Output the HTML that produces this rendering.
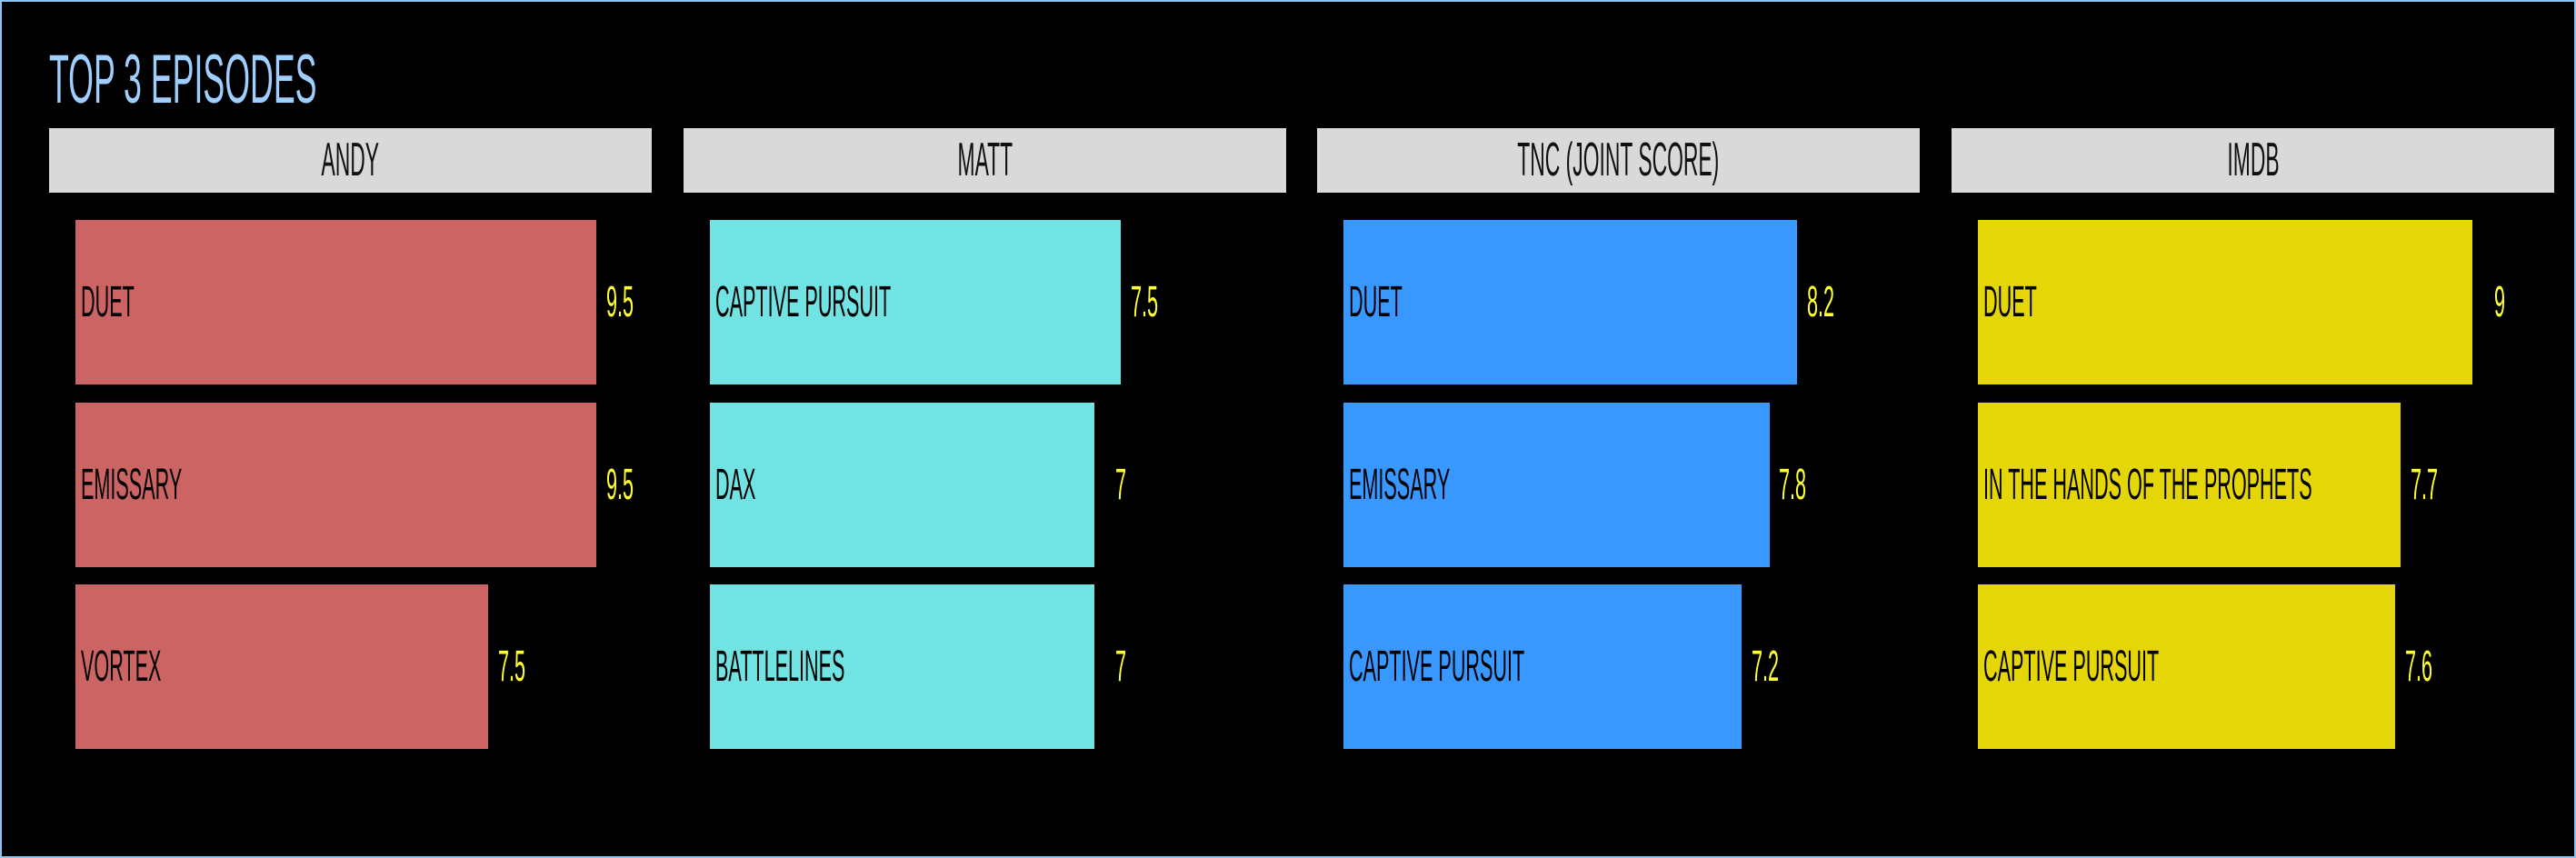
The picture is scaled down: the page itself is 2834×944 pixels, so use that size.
<!DOCTYPE html>
<html><head><meta charset="utf-8"><style>
html,body{margin:0;padding:0;background:#000;}
body{width:2834px;height:944px;position:relative;overflow:hidden;font-family:"Liberation Sans",sans-serif;}
.frame{position:absolute;left:0;top:0;width:2830px;height:940px;border:2px solid #8fc4f0;}
.t{position:absolute;white-space:nowrap;line-height:1;}
.t span{display:inline-block;transform:scaleX(.47);transform-origin:left center;}
.title{left:54px;top:50px;font-size:76px;color:#9fcfff;}
.hd{position:absolute;top:141px;height:71px;background:#d9d9d9;width:663px;}
.hd div{position:absolute;left:0;right:0;top:0;height:71px;line-height:71px;text-align:center;font-size:52px;color:#111;}
.hd div span{display:inline-block;transform:scaleX(.44);transform-origin:center center;}
.bar{position:absolute;height:181px;}
.lbl{position:absolute;left:6px;top:0;height:181px;line-height:181px;font-size:48px;color:#000;white-space:nowrap;}
.lbl span,.val span{display:inline-block;transform:scaleX(.45);transform-origin:left center;}
.val{position:absolute;height:181px;line-height:181px;font-size:48px;color:#ffff33;white-space:nowrap;}
.r{background:#cd6464}.c{background:#72e3e3}.b{background:#3898ff}.y{background:#e5d608}
</style></head><body>
<div class="frame"></div>
<div class="t title"><span>TOP 3 EPISODES</span></div>

<div class="hd" style="left:54px"><div><span>ANDY</span></div></div>
<div class="hd" style="left:752px"><div><span>MATT</span></div></div>
<div class="hd" style="left:1449px"><div><span>TNC (JOINT SCORE)</span></div></div>
<div class="hd" style="left:2147px"><div><span>IMDB</span></div></div>

<div class="bar r" style="left:83px;top:242px;width:573px"><div class="lbl"><span>DUET</span></div></div>
<div class="val" style="left:667px;top:242px"><span>9.5</span></div>
<div class="bar r" style="left:83px;top:443px;width:573px"><div class="lbl"><span>EMISSARY</span></div></div>
<div class="val" style="left:667px;top:443px"><span>9.5</span></div>
<div class="bar r" style="left:83px;top:643px;width:454px"><div class="lbl"><span>VORTEX</span></div></div>
<div class="val" style="left:548px;top:643px"><span>7.5</span></div>

<div class="bar c" style="left:781px;top:242px;width:452px"><div class="lbl"><span>CAPTIVE PURSUIT</span></div></div>
<div class="val" style="left:1244px;top:242px"><span>7.5</span></div>
<div class="bar c" style="left:781px;top:443px;width:423px"><div class="lbl"><span>DAX</span></div></div>
<div class="val" style="left:1227px;top:443px"><span>7</span></div>
<div class="bar c" style="left:781px;top:643px;width:423px"><div class="lbl"><span>BATTLELINES</span></div></div>
<div class="val" style="left:1227px;top:643px"><span>7</span></div>

<div class="bar b" style="left:1478px;top:242px;width:499px"><div class="lbl"><span>DUET</span></div></div>
<div class="val" style="left:1988px;top:242px"><span>8.2</span></div>
<div class="bar b" style="left:1478px;top:443px;width:469px"><div class="lbl"><span>EMISSARY</span></div></div>
<div class="val" style="left:1957px;top:443px"><span>7.8</span></div>
<div class="bar b" style="left:1478px;top:643px;width:438px"><div class="lbl"><span>CAPTIVE PURSUIT</span></div></div>
<div class="val" style="left:1927px;top:643px"><span>7.2</span></div>

<div class="bar y" style="left:2176px;top:242px;width:544px"><div class="lbl"><span>DUET</span></div></div>
<div class="val" style="left:2744px;top:242px"><span>9</span></div>
<div class="bar y" style="left:2176px;top:443px;width:465px"><div class="lbl"><span>IN THE HANDS OF THE PROPHETS</span></div></div>
<div class="val" style="left:2652px;top:443px"><span>7.7</span></div>
<div class="bar y" style="left:2176px;top:643px;width:459px"><div class="lbl"><span>CAPTIVE PURSUIT</span></div></div>
<div class="val" style="left:2646px;top:643px"><span>7.6</span></div>
</body></html>
